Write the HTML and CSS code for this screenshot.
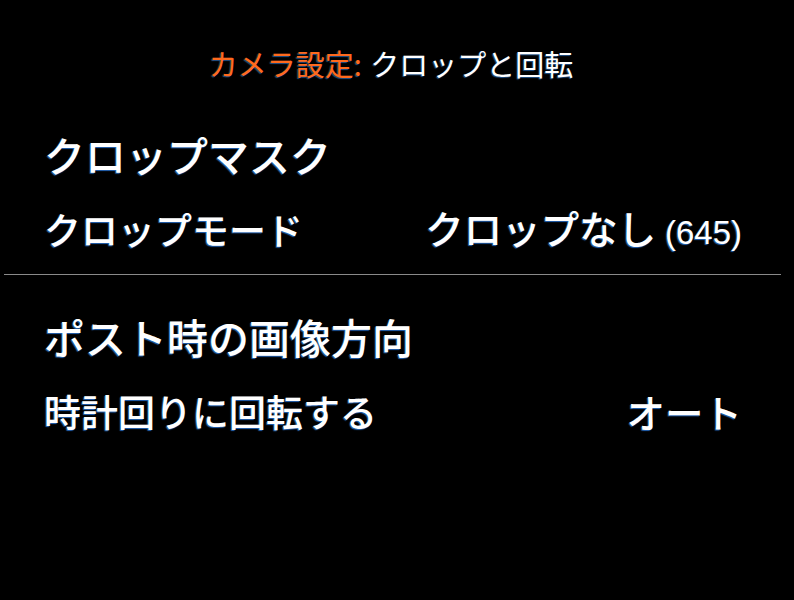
FILE: index.html
```html
<!DOCTYPE html>
<html lang="ja">
<head>
<meta charset="utf-8">
<title>カメラ設定: クロップと回転</title>
<link rel="stylesheet" href="styles.css">
</head>
<body>
<div class="screen">
  <div class="title"><span class="accent">カメラ設定:</span> クロップと回転</div>
  <div class="group first">
    <div class="row"><span class="label big">クロップマスク</span></div>
    <div class="row"><span class="label">クロップモード</span><span class="value">クロップなし <span class="num">(645)</span></span></div>
  </div>
  <div class="divider"></div>
  <div class="group second">
    <div class="row"><span class="label big">ポスト時の画像方向</span></div>
    <div class="row"><span class="label">時計回りに回転する</span><span class="value">オート</span></div>
  </div>
</div>
</body>
</html>
```
FILE: styles.css
```css
html, body {
  margin: 0;
  padding: 0;
  background: #000;
}
.screen {
  width: 794px;
  height: 600px;
  background: #000;
  color: #fff;
  font-family: "Noto Sans CJK JP", "Noto Sans", sans-serif;
  font-weight: 500;
  overflow: hidden;
}
.title {
  padding: 43px 12px 0 0;
  height: 40px;
  line-height: 40px;
  text-align: center;
  font-size: 29px;
  font-weight: 400;
  word-spacing: 2px;
  color: #fff;
  text-shadow: -1px 1px 1px rgba(40, 100, 170, 0.8);
}
.accent {
  color: #ff6a1e;
}
.group.first {
  margin-top: 34px;
}
.group.second {
  margin-top: 24px;
}
.row {
  display: flex;
  justify-content: space-between;
  align-items: center;
  height: 75px;
  padding: 0 52px 0 44px;
  text-shadow: -1px 1px 1px rgba(40, 110, 200, 0.9);
}
.label {
  font-size: 37px;
  line-height: 75px;
}
.label.big {
  font-size: 41px;
}
.value {
  font-size: 38.5px;
  line-height: 75px;
}
.num {
  font-family: "Liberation Sans", Arial, sans-serif;
  font-size: 33px;
  font-weight: 400;
}
.divider {
  margin: 7px 13px 0 4px;
  height: 1px;
  background: #8a8a8a;
}
```
